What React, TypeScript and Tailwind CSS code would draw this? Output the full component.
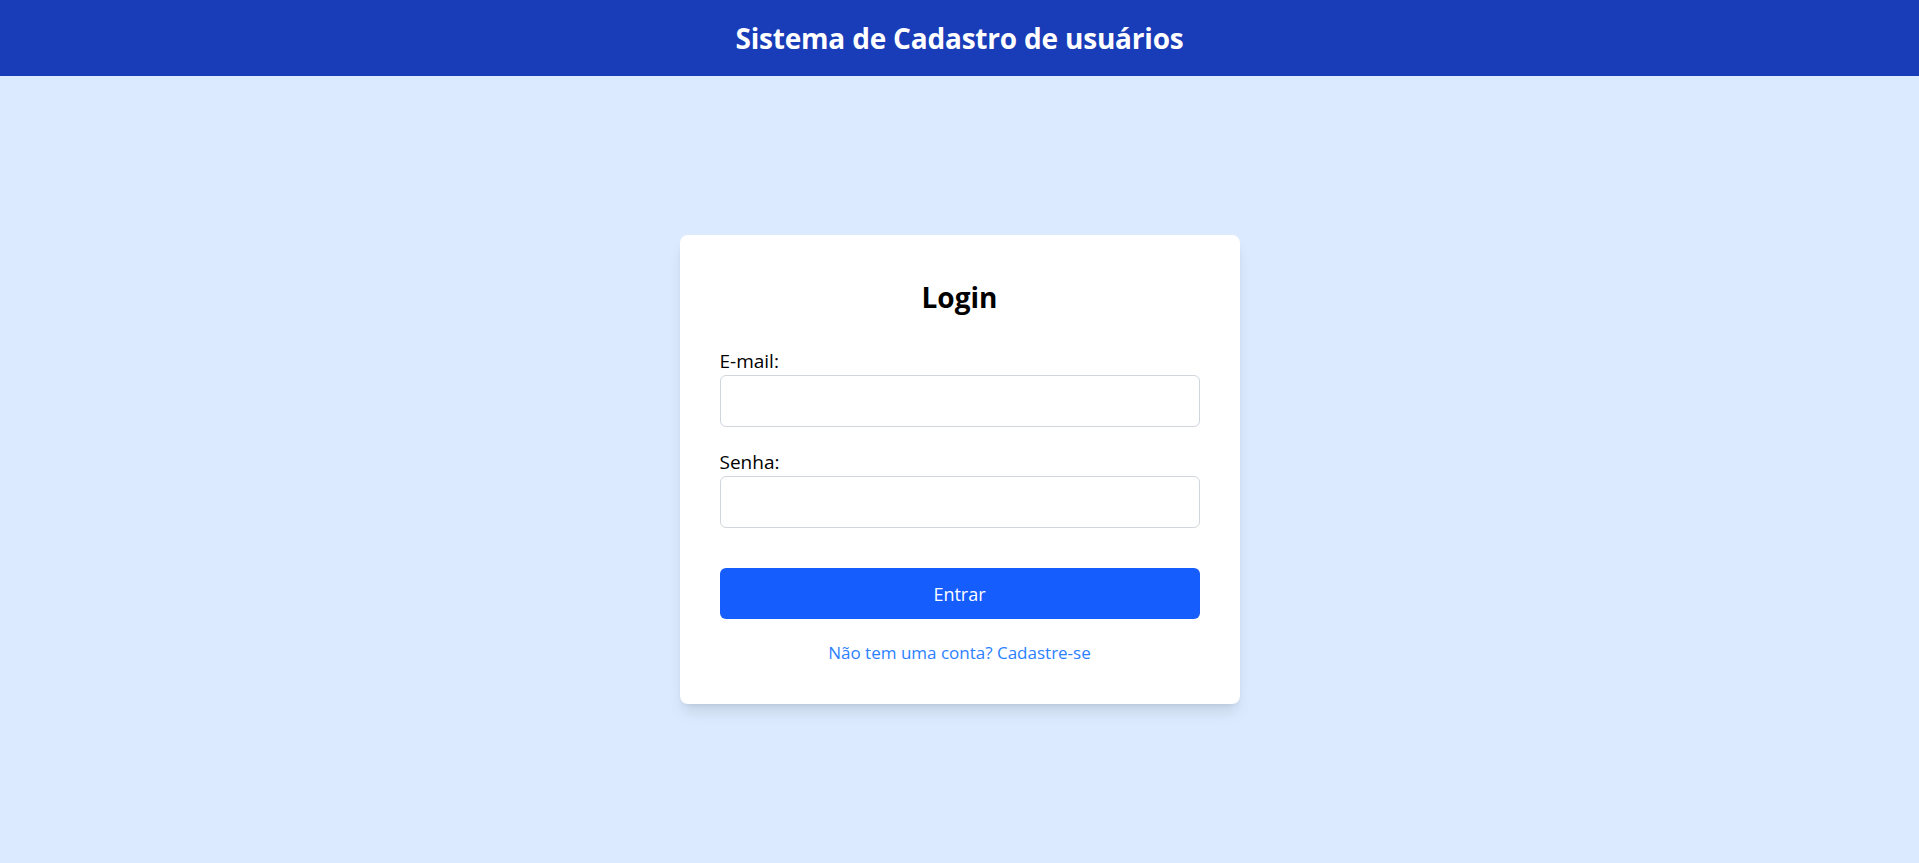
export default function App() {
  return (
    <div className="min-h-screen flex flex-col bg-blue-100 font-['Open_Sans',sans-serif]">
      <header className="h-[76px] bg-blue-800 flex items-center justify-center shrink-0">
        <h1 className="text-[28px] font-bold text-white tracking-[-0.2px]">Sistema de Cadastro de usuários</h1>
      </header>

      <main className="flex-1 flex items-center justify-center">
        <div className="w-[560px] bg-white rounded-lg shadow-lg px-10 pt-11 pb-[37px]">
          <h2 className="text-[28px] leading-9 font-bold text-center text-black mb-8">Login</h2>

          <form onSubmit={e => e.preventDefault()}>
            <div className="mb-[21px]">
              <label className="block text-[19px] leading-7 text-black">E-mail:</label>
              <input
                type="email"
                className="w-full h-[52px] px-3 border border-gray-300 rounded-md outline-none"
              />
            </div>

            <div>
              <label className="block text-[19px] leading-7 text-black">Senha:</label>
              <input
                type="password"
                className="w-full h-[52px] px-3 border border-gray-300 rounded-md outline-none"
              />
            </div>

            <button
              type="submit"
              className="w-full h-[51px] mt-10 bg-blue-600 text-white text-lg rounded-md"
            >
              Entrar
            </button>
          </form>

          <p className="mt-5 text-center text-[17px] leading-7">
            <a href="#" className="text-blue-500">Não tem uma conta? Cadastre-se</a>
          </p>
        </div>
      </main>
    </div>
  )
}
